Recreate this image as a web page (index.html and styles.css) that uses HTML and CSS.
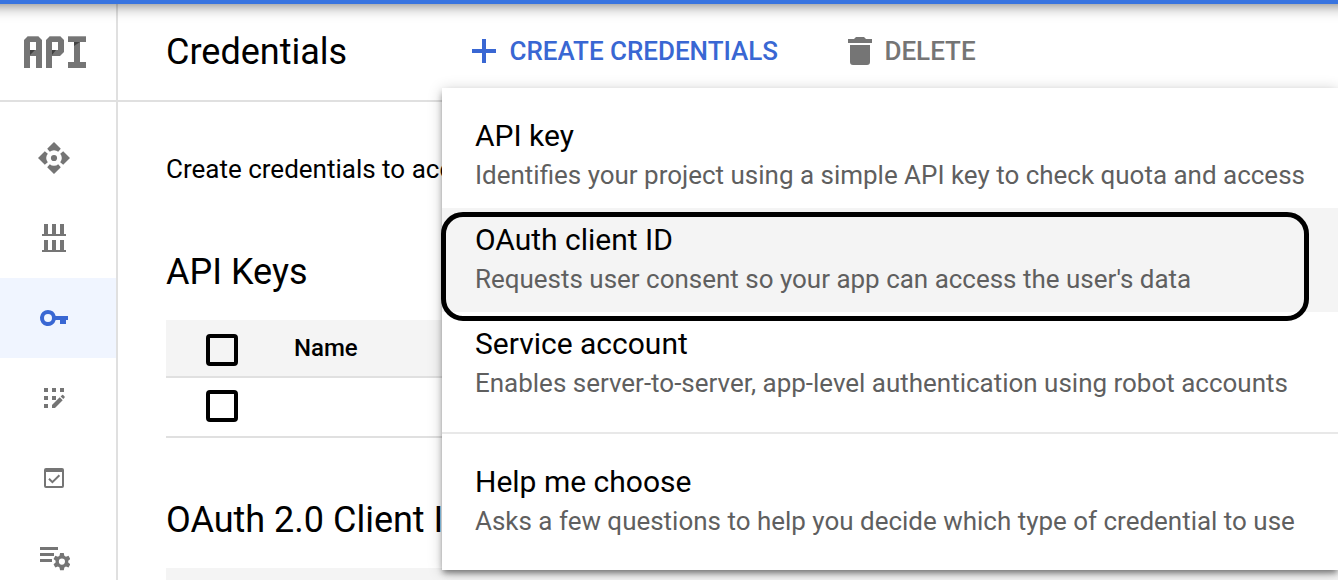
FILE: index.html
```html
<!DOCTYPE html>
<html lang="en">
<head>
<meta charset="utf-8">
<title>Credentials</title>
<link rel="stylesheet" href="styles.css">
</head>
<body>
<div class="app">
  <div class="topbar"></div>
  <nav class="sidebar">
    <div class="logo">
      <svg width="62" height="32" viewBox="0 0 62 32" fill="#757575" role="img" aria-label="API">
        <path fill-rule="evenodd" d="M0 32V4L4 0H14L18 4V32H12V20H6V32ZM6 6V14H12V6Z"/>
        <path fill-rule="evenodd" d="M22 32V4L26 0H36L40 4V16L36 20H28V32ZM28 6V14H34V6Z"/>
        <path d="M44 0H62V6H56V26H62V32H44V26H50V6H44Z"/>
        <path fill="#424242" d="M6 14H11L6 19ZM28 14H32L28 19ZM50 6H56L50 10Z"/>
        <path fill="#9e9e9e" d="M4 0H14V1H4ZM26 0H36V1H26ZM44 0H62V1H44Z"/>
      </svg>
    </div>
    <div class="nav-list">
      <a class="nav-item">
        <svg width="32" height="32" viewBox="-16 -16 32 32" fill="currentColor">
          <g id="arm"><path d="M0-16L6.800-9.200L4.200-6.200Q2.500-7.800 0-7.800T-4.200-6.200L-6.800-9.200Z"/></g>
          <use href="#arm" transform="rotate(90)"/><use href="#arm" transform="rotate(180)"/><use href="#arm" transform="rotate(270)"/>
          <circle r="3.1"/>
        </svg>
      </a>
      <a class="nav-item">
        <svg width="32" height="32" viewBox="0 0 32 32" fill="currentColor">
          <path d="M6 2h4v10h4V2h4v10h4V2h4v10h2v2H4v-2h2zM6 18h4v10h4V18h4v10h4V18h4v10h2v2H4v-2h2z"/>
        </svg>
      </a>
      <a class="nav-item selected">
        <svg width="32" height="32" viewBox="0 0 32 32" fill="currentColor">
          <path fill-rule="evenodd" d="M10 8a8 8 0 0 1 7.700 6H30v4h-2v4h-6v-4h-4.300A8 8 0 1 1 10 8zm0 4a4 4 0 1 0 0 8 4 4 0 0 0 0-8z"/>
        </svg>
      </a>
      <a class="nav-item">
        <svg width="32" height="32" viewBox="0 0 32 32" fill="currentColor">
          <path d="M6 6h4v4H6zM14 6h4v4h-4zM22 6h4v4h-4zM6 14h4v4H6zM14 14h4v4h-4zM6 22h4v4H6zM14 26v-3l7.700-7.700 3 3L17 26zM22.600 14.500l1.500-1.500q.5-.4 1 0l1.500 1.500q.5.500 0 1l-1.300 1.500z"/>
        </svg>
      </a>
      <a class="nav-item">
        <svg width="32" height="32" viewBox="0 0 32 32" fill="currentColor">
          <path fill-rule="evenodd" d="M8 6h16q2 0 2 2v16q0 2-2 2H8q-2 0-2-2V8q0-2 2-2zm0 4v14h16V10z"/>
          <path d="M11 16.800l3.400 3.400 7-7" fill="none" stroke="currentColor" stroke-width="2"/>
        </svg>
      </a>
      <a class="nav-item">
        <svg width="32" height="32" viewBox="0 0 32 32" fill="currentColor">
          <path d="M2 5h18v3H2zM2 11h14v3H2zM2 17h12v3H2z"/>
          <path fill-rule="evenodd" d="M22 12h4l.6 2.900 1.700 1 2.800-1 1.900 3.400-2.200 1.900v2l2.200 1.900-1.900 3.400-2.800-1-1.700 1L26 30.400h-4l-.6-2.900-1.700-1-2.800 1-1.900-3.400 2.200-1.900v-2L15 18.300l1.900-3.400 2.800 1 1.700-1zM24 17.900a3.300 3.300 0 1 0 0 6.600 3.300 3.300 0 0 0 0-6.600z" transform="translate(1.600 -.1) scale(.93)"/>
        </svg>
      </a>
    </div>
  </nav>
  <main class="main">
    <header class="header">
      <h1 class="heading page-title">Credentials</h1>
      <button class="action create">
        <svg width="24" height="24" viewBox="0 0 24 24" fill="currentColor"><path d="M10 0h4v10h10v4H14v10h-4V14H0v-4h10z"/></svg>
        <span>CREATE CREDENTIALS</span>
      </button>
      <button class="action delete">
        <svg width="24" height="28" viewBox="0 0 24 28" fill="currentColor"><path d="M0 2h6l2-2h8l2 2h6v4H0zM2 8h20v17q0 3-3 3H5q-3 0-3-3z"/></svg>
        <span>DELETE</span>
      </button>
    </header>
    <section class="content">
      <p class="intro">Create credentials to access</p>
      <h2 class="heading keys-title">API Keys</h2>
      <div class="table">
        <div class="row row-head"><span class="checkbox"></span><span class="column-name">Name</span></div>
        <div class="row"><span class="checkbox"></span></div>
      </div>
      <h2 class="heading clients-title">OAuth 2.0 Client IDs</h2>
      <div class="row-head next-table"></div>
    </section>
  </main>
  <div class="menu">
    <div class="item"><div class="item-title">API key</div><div class="item-text">Identifies your project using a simple API key to check quota and access</div></div>
    <div class="item active"><div class="item-title">OAuth client ID</div><div class="item-text">Requests user consent so your app can access the user's data</div><div class="focus-ring"></div></div>
    <div class="item"><div class="item-title">Service account</div><div class="item-text">Enables server-to-server, app-level authentication using robot accounts</div></div>
    <div class="divider"></div>
    <div class="item"><div class="item-title">Help me choose</div><div class="item-text">Asks a few questions to help you decide which type of credential to use</div></div>
  </div>
</div>
</body>
</html>
```
FILE: styles.css
```css
* { box-sizing: border-box; }
body { margin: 0; font-family: Roboto, sans-serif; color: #000; background: #fff; }
.app {
  position: relative;
  display: grid;
  grid-template-columns: 118px 1fr;
  grid-template-rows: 4px 576px;
  width: 1338px;
  height: 580px;
  overflow: hidden;
}
.topbar {
  grid-column: 1 / 3;
  position: relative;
  z-index: 2;
  background: #3874e0;
  box-shadow: 0 -20px 16px 20px rgba(0, 0, 0, .62);
}
.sidebar { border-right: 2px solid #e0e0e0; color: #757575; }
.logo { height: 98px; padding: 32px 0 0 24px; border-bottom: 2px solid #e0e0e0; }
.logo svg { display: block; }
.nav-list { padding-top: 16px; }
.nav-item { display: flex; align-items: center; height: 80px; padding-left: 38px; }
.selected { background: #f0f5ff; color: #3967d3; }
.main { min-width: 0; overflow: hidden; }
.header {
  display: flex;
  align-items: center;
  height: 98px;
  padding: 0 0 0 48px;
  border-bottom: 2px solid #e0e0e0;
}
.heading { margin: 0; font-size: 36px; font-weight: 400; line-height: 48px; white-space: nowrap; }
.page-title { width: 306px; }
.action {
  display: flex;
  align-items: center;
  margin-bottom: 2px;
  padding: 0;
  border: 0;
  background: none;
  font: 500 26px/36px Roboto, sans-serif;
  letter-spacing: -.02px;
  white-space: nowrap;
}
.create { gap: 13.5px; width: 376px; color: #3967d3; }
.delete { gap: 12.5px; color: #757575; }
.content { padding-left: 48px; }
.intro { margin: 0; padding-top: 49px; font-size: 26px; line-height: 36px; white-space: nowrap; }
.keys-title { margin-top: 61px; }
.table { margin-top: 24px; }
.row { display: flex; height: 60px; padding: 12px 0 0 40px; border-bottom: 2px solid #e0e0e0; }
.row-head { background: #f4f4f4; }
.row.row-head { height: 58px; padding-top: 14px; }
.checkbox { width: 32px; height: 32px; border: 4px solid #000; border-radius: 4px; }
.column-name { margin-left: 56px; font-size: 24px; font-weight: 500; line-height: 28px; }
.clients-title { margin-top: 58px; }
.next-table { height: 40px; margin-top: 24px; }
.menu {
  position: absolute;
  left: 442px;
  top: 88px;
  z-index: 3;
  width: 896px;
  height: 482px;
  padding-top: 16px;
  background: #fff;
  box-shadow: 0 4px 6px -1px rgba(0, 0, 0, .45), 0 2px 14px rgba(0, 0, 0, .2);
}
.item { position: relative; height: 104px; padding: 12px 0 0 33px; white-space: nowrap; }
.item-title { font-size: 30px; line-height: 40px; }
.item-text {
  margin-top: -1px;
  font-size: 25.98px;
  line-height: 40px;
  color: #5f5f5f;
}
.active { background: #f4f4f4; }
.focus-ring {
  position: absolute;
  left: -1px;
  top: 4px;
  width: 868px;
  height: 108.5px;
  border: 5px solid #000;
  border-radius: 22px;
  z-index: 1;
}
.divider { height: 2px; margin: 16px 0; background: #e8e8e8; }
```
